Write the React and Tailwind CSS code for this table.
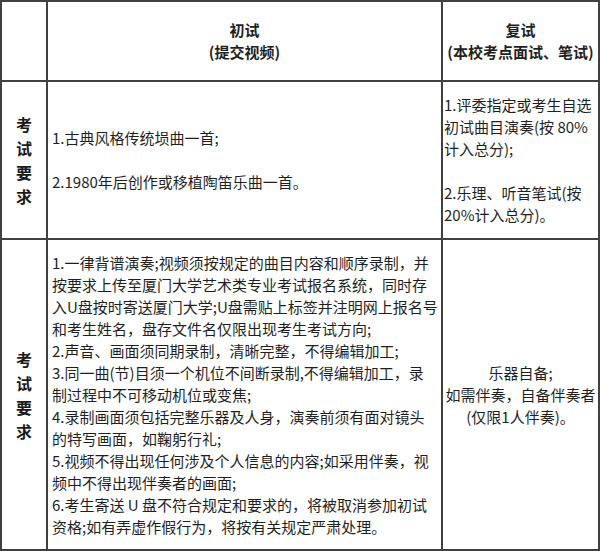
import React from "react";

const font = { fontFamily: '"Noto Sans CJK SC", sans-serif' };

export default function App() {
  const row3 = [
    "1.一律背谱演奏;视频须按规定的曲目内容和顺序录制，并",
    "按要求上传至厦门大学艺术类专业考试报名系统，同时存",
    "入U盘按时寄送厦门大学;U盘需贴上标签并注明网上报名号",
    "和考生姓名，盘存文件名仅限出现考生考试方向;",
    "2.声音、画面须同期录制，清晰完整，不得编辑加工;",
    "3.同一曲(节)目须一个机位不间断录制,不得编辑加工，录",
    "制过程中不可移动机位或变焦;",
    "4.录制画面须包括完整乐器及人身，演奏前须有面对镜头",
    "的特写画面，如鞠躬行礼;",
    "5.视频不得出现任何涉及个人信息的内容;如采用伴奏，视",
    "频中不得出现伴奏者的画面;",
    "6.考生寄送 U 盘不符合规定和要求的，将被取消参加初试",
    "资格;如有弄虚作假行为，将按有关规定严肃处理。",
  ];
  const vert = (
    <div className="flex flex-col items-center text-[16px] font-bold leading-[24px] text-[#1a1a1a]">
      <span>考</span>
      <span>试</span>
      <span>要</span>
      <span>求</span>
    </div>
  );
  return (
    <div className="w-[600px] h-[551px] bg-white" style={font}>
      <div className="w-[600px] h-[551px] border-2 border-[#404040] grid grid-cols-[46px_395px_1fr] grid-rows-[80px_158px_1fr] text-[15px] leading-[22px] text-[#1f1f1f]">
        {/* header */}
        <div className="border-r-2 border-b-2 border-[#404040]" />
        <div className="border-r-2 border-b-2 border-[#404040] flex flex-col items-center justify-center font-bold whitespace-nowrap">
          <span>初试</span>
          <span>(提交视频)</span>
        </div>
        <div className="border-b-2 border-[#404040] flex flex-col items-center justify-center font-bold whitespace-nowrap">
          <span>复试</span>
          <span>(本校考点面试、笔试)</span>
        </div>

        {/* row 2 */}
        <div className="border-r-2 border-b-2 border-[#404040] flex items-center justify-center">
          {vert}
        </div>
        <div className="border-r-2 border-b-2 border-[#404040] flex flex-col justify-center pl-[4px] whitespace-nowrap">
          <span>1.古典风格传统埙曲一首;</span>
          <span>&nbsp;</span>
          <span>2.1980年后创作或移植陶笛乐曲一首。</span>
        </div>
        <div className="border-b-2 border-[#404040] flex flex-col justify-center pl-[1px] whitespace-nowrap">
          <span>1.评委指定或考生自选</span>
          <span>初试曲目演奏(按 80%</span>
          <span>计入总分);</span>
          <span>&nbsp;</span>
          <span>2.乐理、听音笔试(按</span>
          <span>20%计入总分)。</span>
        </div>

        {/* row 3 */}
        <div className="border-r-2 border-[#404040] flex items-center justify-center">
          {vert}
        </div>
        <div className="border-r-2 border-[#404040] flex flex-col justify-center pl-[4px] whitespace-nowrap">
          {row3.map((t, i) => (
            <span key={i}>{t}</span>
          ))}
        </div>
        <div className="flex flex-col items-center justify-center whitespace-nowrap">
          <span>乐器自备;</span>
          <span>如需伴奏，自备伴奏者</span>
          <span>(仅限1人伴奏)。</span>
        </div>
      </div>
    </div>
  );
}
